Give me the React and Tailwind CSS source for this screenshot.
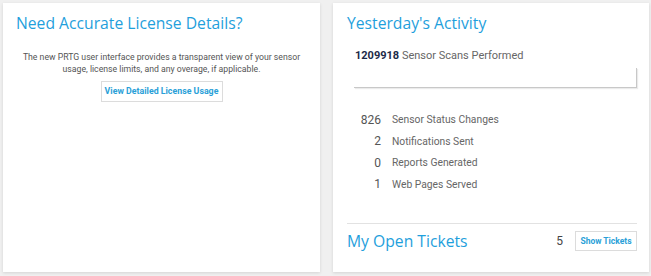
import React from 'react';

const stats = [
  { n: 826, label: 'Sensor Status Changes' },
  { n: 2, label: 'Notifications Sent' },
  { n: 0, label: 'Reports Generated' },
  { n: 1, label: 'Web Pages Served' },
];

function LicenseCard() {
  return (
    <div className="w-[317px] h-[269px] bg-white shadow-[0_1px_3px_rgba(0,0,0,0.12)] pt-[9px] px-[13px] flex flex-col items-stretch">
      <h3 className="font-['Open_Sans',sans-serif] text-[15.7px] leading-[22px] text-[#1fa0dc]">
        Need Accurate License Details?
      </h3>
      <p className="mt-[17px] text-center whitespace-nowrap font-['Roboto',sans-serif] text-[8.7px] leading-[12px] text-[#555]">
        The new PRTG user interface provides a transparent view of your sensor
        <br />
        usage, license limits, and any overage, if applicable.
      </p>
      <div className="mt-[6px] flex justify-center">
        <button className="h-[21px] w-[122px] whitespace-nowrap border border-[#dcdcdc] bg-white font-['Roboto',sans-serif] text-[8.8px] font-bold text-[#2a9fd8]">
          View Detailed License Usage
        </button>
      </div>
    </div>
  );
}

function ActivityCard() {
  return (
    <div className="w-[316px] h-[269px] bg-white shadow-[0_1px_3px_rgba(0,0,0,0.12)] pt-[9px] pl-[14px] pr-[12px] flex flex-col font-['Roboto',sans-serif]">
      <h3 className="font-['Open_Sans',sans-serif] text-[15.7px] leading-[22px] text-[#1fa0dc]">
        Yesterday's Activity
      </h3>
      <div className="mt-[15px] pl-[8px] text-[11px] leading-[14px]">
        <span className="font-bold text-[#1c2a48]">1209918</span>
        <span className="text-[#666]"> Sensor Scans Performed</span>
      </div>
      <div className="ml-[7px] mt-[5px] h-[20px] border-r border-b border-[#c8c8c8] shadow-[1px_1px_1px_rgba(0,0,0,0.08)]" />
      <div className="mt-[21px] pl-[8px] flex flex-col">
        {stats.map((s) => (
          <div key={s.label} className="flex items-center h-[21.5px] gap-[11px]">
            <span className="w-[26px] text-right text-[12px] text-[#555]">{s.n}</span>
            <span className="text-[10.3px] text-[#666]">{s.label}</span>
          </div>
        ))}
      </div>
      <div className="mt-[28px] border-t border-[#e2e2e2]" />
      <div className="mt-[6px] flex items-center">
        <h3 className="flex-1 font-['Open_Sans',sans-serif] text-[15.7px] leading-[22px] text-[#1fa0dc]">
          My Open Tickets
        </h3>
        <span className="text-[12px] text-[#444]">5</span>
        <button className="ml-[12px] h-[20px] w-[62px] whitespace-nowrap border border-[#dcdcdc] bg-white text-[8.5px] font-bold text-[#2a9fd8]">
          Show Tickets
        </button>
      </div>
    </div>
  );
}

export default function App() {
  return (
    <div className="w-[651px] h-[276px] bg-[#f0f0f0] pt-[3px] pl-[3px] flex gap-[13px]">
      <LicenseCard />
      <ActivityCard />
    </div>
  );
}
